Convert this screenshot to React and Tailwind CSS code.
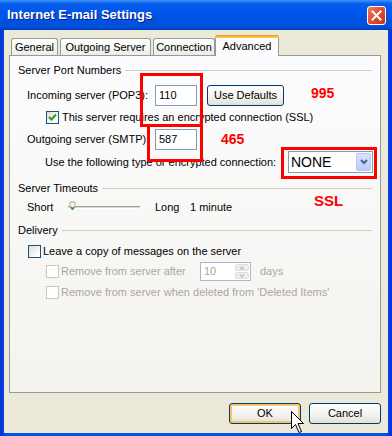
const btn =
  "flex items-center justify-center h-[21px] rounded-[3px] border border-[#003C74] bg-[linear-gradient(to_bottom,#FFFFFF_0%,#F3F2EE_60%,#E3E0D6_100%)]";

const GroupHeader = ({ label, mt }) => (
  <div className={`flex items-center h-[13px] ml-[8px] mr-[8px] ${mt}`}>
    <span className="mr-[4px]">{label}</span>
    <div className="flex-1 h-px bg-[#D0D0BF]" />
  </div>
);

const CheckBox = ({ checked, disabled }) => (
  <div
    className={`w-[13px] h-[13px] shrink-0 border flex items-center justify-center ${
      disabled
        ? "border-[#CAC8BB] bg-[#FFFFFF]"
        : "border-[#1C5180] bg-[linear-gradient(135deg,#DCDCD7_0%,#FFFFFF_80%)]"
    }`}
  >
    {checked && (
      <svg width="9" height="9" viewBox="0 0 9 9">
        <path d="M1 4 L3.5 6.5 L8 1.5" fill="none" stroke="#21A121" strokeWidth="2" />
      </svg>
    )}
  </div>
);

const Tab = ({ label, w, active }) =>
  active ? (
    <div
      className={`${w} h-[21px] relative z-10 flex items-center justify-center border border-b-0 border-[#919B9C] rounded-t-[3px] bg-[#FCFCFE]`}
    >
      <div className="absolute -top-px -left-px -right-px h-[3px] rounded-t-[3px] bg-[linear-gradient(to_bottom,#E68B2C_0%,#FFC73C_60%)]" />
      <span className="pt-[1px]">{label}</span>
    </div>
  ) : (
    <div
      className={`${w} ml-[2px] h-[18px] flex items-center justify-center border border-b-0 border-[#919B9C] rounded-t-[3px] bg-[linear-gradient(to_bottom,#FFFFFF_0%,#F3F3EF_60%,#ECEBE6_100%)]`}
    >
      {label}
    </div>
  );

export default function App() {
  return (
    <div className="relative w-[392px] h-[436px] bg-[linear-gradient(to_right,#0831D9_0%,#0055E5_2%,#0055E5_98%,#0831D9_100%)] font-['Liberation_Sans',Arial,sans-serif] text-[11px] text-black overflow-hidden select-none">
      {/* Title bar */}
      <div className="h-[30px] flex items-center justify-between pl-[7px] pr-[6px] bg-[linear-gradient(to_bottom,#3D95FF_0%,#0A5FEA_12%,#0058EE_30%,#0054E3_60%,#0050DA_88%,#0040C4_100%)]">
        <span className="text-[13px] font-bold text-white [text-shadow:1px_1px_0_#0A1883]">
          Internet E-mail Settings
        </span>
        <div className="w-[19px] h-[19px] rounded-[3px] border border-white bg-[linear-gradient(135deg,#E97F62_0%,#E14D2B_50%,#C4361A_100%)] flex items-center justify-center">
          <svg width="11" height="11" viewBox="0 0 11 11">
            <path d="M1.5 1.5 L9.5 9.5 M9.5 1.5 L1.5 9.5" stroke="white" strokeWidth="2" strokeLinecap="square" />
          </svg>
        </div>
      </div>

      {/* Body */}
      <div className="mx-[4px] h-[403px] bg-[#ECE9D8] px-[5px] flex flex-col">
        <div className="mt-[6px] h-[20px] flex items-end -mb-px">
          <Tab label="General" w="w-[47px]" />
          <Tab label="Outgoing Server" w="w-[91px]" />
          <Tab label="Connection" w="w-[62px]" />
          <Tab label="Advanced" w="w-[64px]" active />
        </div>

        <div className="w-[372px] h-[338px] border border-[#919B9C] bg-[linear-gradient(to_bottom,#FCFCFE_0%,#F4F3EE_100%)] flex flex-col">
          <GroupHeader label="Server Port Numbers" mt="mt-[8px]" />

          <div className="mt-[8px] h-[21px] flex items-center ml-[17px]">
            <span className="w-[128px]">Incoming server (POP3):</span>
            <div className="w-[42px] h-[21px] border border-[#7F9DB9] bg-white flex items-center pl-[3px]">
              110
            </div>
            <div className={`${btn} ml-[10px] w-[77px]`}>Use Defaults</div>
          </div>

          <div className="mt-[5px] h-[13px] flex items-center ml-[36px] gap-[3px]">
            <CheckBox checked />
            <span>This server requires an encrypted connection (SSL)</span>
          </div>

          <div className="mt-[5px] h-[21px] flex items-center ml-[17px]">
            <span className="w-[128px]">Outgoing server (SMTP):</span>
            <div className="w-[42px] h-[21px] border border-[#7F9DB9] bg-white flex items-center pl-[3px]">
              587
            </div>
          </div>

          <div className="mt-[1px] h-[22px] flex items-center ml-[35px]">
            <span className="w-[243px]">Use the following type or encrypted connection:</span>
            <div className="w-[85px] h-[22px] border border-[#7F9DB9] bg-white flex items-center justify-between pl-[2px] pr-[1px]">
              <span className="text-[14px] leading-none">NONE</span>
              <div className="w-[15px] h-[18px] rounded-[2px] bg-[linear-gradient(to_bottom,#D6E3FD_0%,#B9CDF9_100%)] border border-[#B5C8F4] flex items-center justify-center">
                <svg width="8" height="6" viewBox="0 0 8 6">
                  <path d="M1 1 L4 4 L7 1" fill="none" stroke="#4D6185" strokeWidth="2" />
                </svg>
              </div>
            </div>
          </div>

          <GroupHeader label="Server Timeouts" mt="mt-[9px]" />

          <div className="mt-[6px] h-[13px] flex items-center ml-[17px]">
            <span className="w-[41px]">Short</span>
            <div className="relative w-[72px] h-[13px] flex items-center">
              <div className="w-full h-[3px] border-t border-[#9D9C99] border-b border-b-white bg-[#DCDBD5]" />
              <svg className="absolute left-[1px] top-[0px]" width="9" height="11" viewBox="0 0 9 11">
                <path d="M1 1 H6 V6 L3.5 9 L1 6 Z" fill="#F8F8F5" stroke="#A8A79F" />
                <path d="M2 6 L3.5 8 L5 6" fill="none" stroke="#21A121" strokeWidth="1.5" />
              </svg>
            </div>
            <span className="ml-[15px] w-[35px]">Long</span>
            <span>1 minute</span>
          </div>

          <GroupHeader label="Delivery" mt="mt-[10px]" />

          <div className="mt-[8px] h-[13px] flex items-center ml-[18px] gap-[2px]">
            <CheckBox />
            <span>Leave a copy of messages on the server</span>
          </div>

          <div className="mt-[4px] h-[19px] flex items-center ml-[36px] text-[#ACA899]">
            <div className="w-[154px] flex items-center gap-[2px]">
              <CheckBox disabled />
              <span>Remove from server after</span>
            </div>
            <div className="w-[51px] h-[19px] border border-[#A5B8CF] bg-white flex items-center justify-between pl-[3px] pr-[1px]">
              <span>10</span>
              <div className="w-[14px] h-[15px] flex flex-col gap-px">
                <div className="flex-1 rounded-[2px] bg-[#F0EFEA] border border-[#E0DFD8] flex items-center justify-center">
                  <svg width="6" height="4" viewBox="0 0 6 4">
                    <path d="M1 3.5 L3 1 L5 3.5" fill="none" stroke="#C2C1B8" strokeWidth="1.3" />
                  </svg>
                </div>
                <div className="flex-1 rounded-[2px] bg-[#F0EFEA] border border-[#E0DFD8] flex items-center justify-center">
                  <svg width="6" height="4" viewBox="0 0 6 4">
                    <path d="M1 0.5 L3 3 L5 0.5" fill="none" stroke="#C2C1B8" strokeWidth="1.3" />
                  </svg>
                </div>
              </div>
            </div>
            <span className="ml-[9px]">days</span>
          </div>

          <div className="mt-[5px] h-[13px] flex items-center ml-[36px] gap-[2px] text-[#ACA899]">
            <CheckBox disabled />
            <span>Remove from server when deleted from 'Deleted Items'</span>
          </div>
        </div>

        <div className="mt-[10px] w-[372px] flex justify-end gap-[8px]">
          <div className={`${btn} w-[72px] shadow-[inset_0_0_0_2px_#F8C465]`}>OK</div>
          <div className={`${btn} w-[72px]`}>Cancel</div>
        </div>
      </div>

      {/* Annotations */}
      <div className="absolute left-[140px] top-[73px] w-[63px] h-[54px] border-[3px] border-[#FF0000]" />
      <div className="absolute left-[147px] top-[124px] w-[56px] h-[38px] border-[3px] border-[#FF0000]" />
      <div className="absolute left-[281px] top-[147px] w-[96px] h-[32px] border-[3px] border-[#FF0000]" />
      <span className="absolute left-[311px] top-[83px] text-[14px] font-bold text-[#FF0000]">995</span>
      <span className="absolute left-[221px] top-[129px] text-[14px] font-bold text-[#FF0000]">465</span>
      <span className="absolute left-[314px] top-[190px] text-[15px] font-bold text-[#FF0000]">SSL</span>

      {/* Cursor */}
      <svg className="absolute left-[291px] top-[411px]" width="14" height="25" viewBox="0 0 14 25">
        <path
          d="M0.5 0.5 L0.5 17.5 L4.5 13.5 L8 21.5 L10.5 20.5 L7 12.5 L12.5 12.5 Z"
          fill="white"
          stroke="black"
          strokeWidth="1"
          strokeLinejoin="miter"
        />
      </svg>
    </div>
  );
}
